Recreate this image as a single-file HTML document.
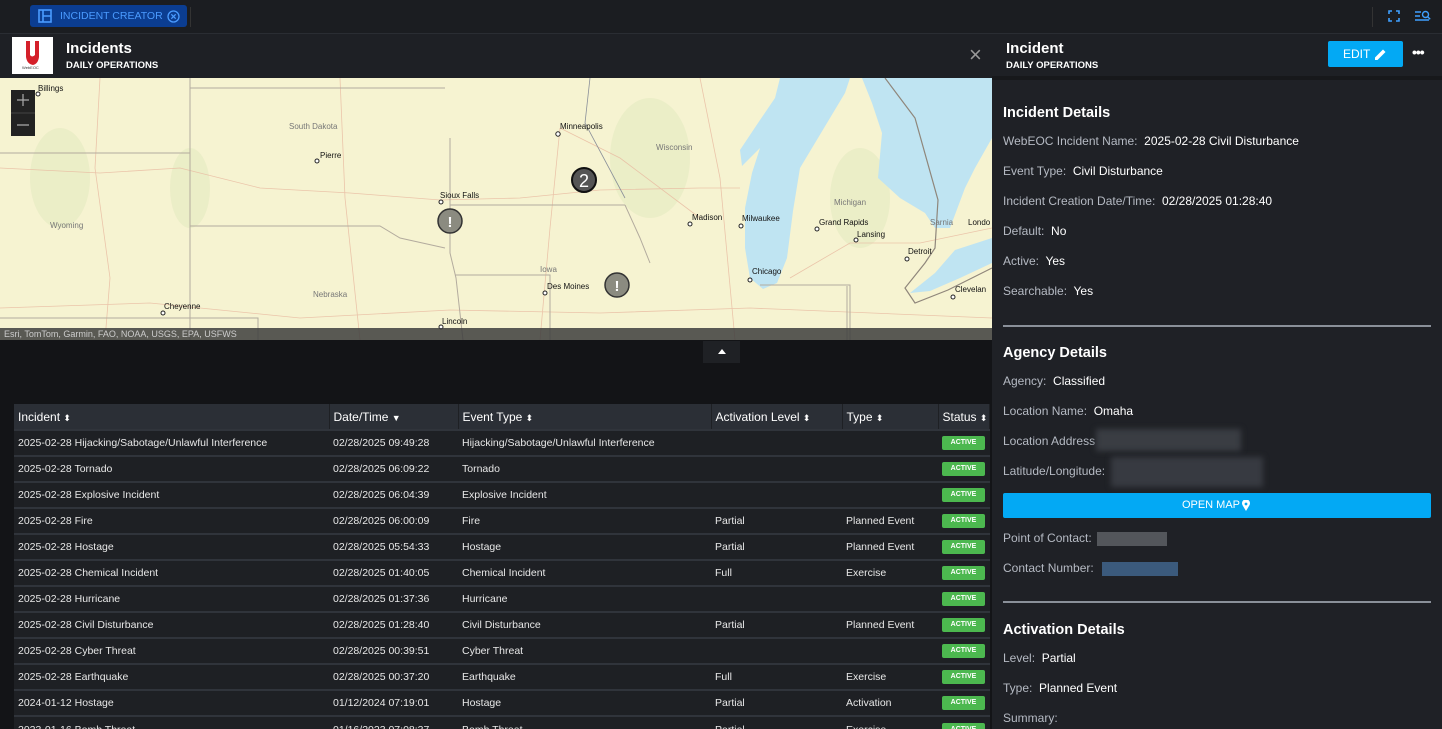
<!DOCTYPE html>
<html><head><meta charset="utf-8"><style>
*{margin:0;padding:0;box-sizing:border-box}
html,body{width:1442px;height:729px;overflow:hidden}
body{background:#131417;font-family:"Liberation Sans",Arial,sans-serif;color:#e6e8eb;position:relative}
.abs{position:absolute}
#top{left:0;top:0;width:1442px;height:34px;background:#1b1d21;border-bottom:1px solid #2a2d33}
#tab{left:30px;top:5px;width:157px;height:22px;background:#0b3d91;border-radius:3px;color:#4a9bff;font-size:10.5px;line-height:22px;white-space:nowrap}
#hdr{left:0;top:34px;width:992px;height:44px;background:#1e2025}
#rhdr{left:992px;top:34px;width:450px;height:46px;background:#1e2025;border-bottom:4px solid #17181b}
#right{left:992px;top:80px;width:450px;height:649px;background:#1f2126}
.t1{font-size:15px;font-weight:bold;color:#fff}
.t2{font-size:9.5px;font-weight:bold;color:#fff}
.lab{font-size:12px;color:#b5bac3;position:absolute;left:11px;white-space:nowrap}
.lab b{color:#fff;font-weight:normal}
.sec{font-size:14.5px;font-weight:bold;color:#fff;position:absolute;left:11px}
table{position:absolute;left:14px;top:404px;width:976px;border-collapse:collapse;font-size:10.5px;table-layout:fixed}
th{background:#2b2f36;color:#fff;font-size:12px;font-weight:normal;text-align:left;height:26px;padding-left:4px;border-right:1px solid #1e2024;white-space:nowrap;overflow:hidden}
td{background:#1e2024;height:26px;padding:0 0 0 4px;border-top:2px solid #30343b;color:#e8e8e8;white-space:nowrap;overflow:hidden;line-height:22px}
.act{display:inline-block;background:#4cb84f;color:#fff;font-size:7px;font-weight:bold;width:43px;height:14px;line-height:14px;text-align:center;border-radius:2px;vertical-align:middle}
.ar{font-size:9px}
</style></head><body>
<div id="top" class="abs"></div>
<div id="tab" class="abs"><svg class="abs" style="left:8px;top:4px" width="14" height="14" viewBox="0 0 14 14" fill="none" stroke="#4a9bff" stroke-width="1.6"><rect x="1" y="1" width="12" height="12"/><path d="M5 1v12M5 7h8"/></svg><span class="abs" style="left:30px">INCIDENT CREATOR</span><svg class="abs" style="left:137px;top:5px" width="13" height="13" viewBox="0 0 13 13" fill="none" stroke="#4a9bff" stroke-width="1.3"><circle cx="6.5" cy="6.5" r="5.5"/><path d="M4.3 4.3l4.4 4.4M8.7 4.3l-4.4 4.4"/></svg></div>
<div class="abs" style="left:190px;top:7px;width:1px;height:20px;background:#333"></div>
<div class="abs" style="left:1372px;top:7px;width:1px;height:20px;background:#333"></div>
<svg class="abs" style="left:1388px;top:10px" width="12" height="12" viewBox="0 0 12 12" fill="none" stroke="#3fa0ff" stroke-width="1.6"><path d="M1 4V1h3M8 1h3v3M11 8v3H8M4 11H1V8"/></svg>
<svg class="abs" style="left:1415px;top:10px" width="16" height="12" viewBox="0 0 16 12" fill="none" stroke="#3fa0ff" stroke-width="1.4"><path d="M0 2h6M0 6h5M0 10h14"/><circle cx="10.5" cy="4.5" r="3"/><path d="M12.7 6.7l2.5 2.5"/></svg>
<div id="hdr" class="abs">
 <div class="abs" style="left:12px;top:3px;width:41px;height:37px;background:#fff"><svg class="abs" style="left:13px;top:4px" width="15" height="24" viewBox="0 0 15 24"><path d="M1 0h4v14q2 3 5 0V0h4v16q-1 7-6 8-6-1-7-8z" fill="#d4202a"/></svg><div class="abs" style="left:10px;top:28px;font-size:4px;color:#333">WebEOC</div></div>
 <div class="abs t1" style="left:66px;top:6px">Incidents</div>
 <div class="abs t2" style="left:66px;top:26px">DAILY OPERATIONS</div>
 <div class="abs" style="left:969px;top:8px;font-size:22px;color:#999">×</div>
</div>
<svg class="abs" style="left:0;top:78px" width="992" height="262" viewBox="0 0 992 262">
<rect width="992" height="262" fill="#f6f3d1"/>
<g fill="#e8ecc4" opacity=".8"><ellipse cx="60" cy="100" rx="30" ry="50"/><ellipse cx="190" cy="110" rx="20" ry="40"/><ellipse cx="650" cy="80" rx="40" ry="60"/><ellipse cx="860" cy="120" rx="30" ry="50"/></g>
<g fill="#bfe4f2">
<path d="M780 0 L850 0 L845 15 L830 40 L800 90 L793 133 L787 180 L777 205 L763 211 L750 200 L745 170 L745 130 L752 95 L760 70 L742 88 L740 72 L758 45 L775 20 Z"/>
<path d="M862 0 L992 0 L992 60 L975 90 L965 110 L950 150 L935 150 L925 135 L900 120 L878 100 L882 55 L872 25 Z"/>
<path d="M910 215 L935 195 L955 172 L992 160 L992 185 L960 200 L930 213 Z"/>
</g>
<g fill="none" stroke="#e8b9a0" stroke-width=".8" opacity=".8">
<path d="M0 90 L100 95 L180 90 L260 110 L350 115 L440 122 L520 120 L600 112 L700 110 L740 110"/>
<path d="M100 0 L95 90 L110 200 L105 262"/><path d="M340 0 L345 120 L360 262"/><path d="M560 50 L550 150 L540 262"/>
<path d="M0 230 L150 225 L300 240 L450 232 L600 235 L750 230 L992 240"/>
<path d="M700 0 L720 100 L735 262"/><path d="M790 200 L850 165 L920 165 L992 150"/><path d="M560 50 L620 80 L700 140"/>
</g>
<g fill="none" stroke="#b3ab9e" stroke-width="1"><path d="M190 0 V262"/><path d="M0 75 H190"/><path d="M190 10 H445"/><path d="M190 148 H380 L400 160 L445 170"/><path d="M450 60 V175 L456 200 L463 262"/><path d="M450 127 H625"/><path d="M455 197 H550 V262"/><path d="M0 240 H258 V262"/><path d="M625 127 L640 160 L650 185"/><path d="M760 207 H850 V262"/><path d="M847 208 V262"/></g>
<path d="M590 0 L585 45 L625 120" fill="none" stroke="#8a8f99" stroke-width=".8"/>
<path d="M885 0 L915 40 L938 122 L935 170 L925 185 L905 210 L915 225 L948 212 L992 190" fill="none" stroke="#8f867b" stroke-width="1.2"/>
<g font-family="Liberation Sans,sans-serif" font-size="8" fill="#111"><text x="38" y="13">Billings</text><text x="320" y="80">Pierre</text><text x="440" y="120">Sioux Falls</text><text x="560" y="51">Minneapolis</text><text x="547" y="211">Des Moines</text><text x="442" y="246">Lincoln</text><text x="164" y="231">Cheyenne</text><text x="692" y="142">Madison</text><text x="742" y="143">Milwaukee</text><text x="819" y="147">Grand Rapids</text><text x="857" y="159">Lansing</text><text x="908" y="176">Detroit</text><text x="752" y="196">Chicago</text><text x="955" y="214">Clevelan</text><text x="968" y="147">Londo</text></g>
<g font-family="Liberation Sans,sans-serif" font-size="8" fill="#777"><text x="289" y="51">South Dakota</text><text x="50" y="150">Wyoming</text><text x="313" y="219">Nebraska</text><text x="540" y="194">Iowa</text><text x="656" y="72">Wisconsin</text><text x="834" y="127">Michigan</text><text x="930" y="147">Sarnia</text></g>
<g fill="#fff" stroke="#222" stroke-width="1"><circle cx="38" cy="16" r="2"/><circle cx="317" cy="83" r="2"/><circle cx="441" cy="124" r="2"/><circle cx="558" cy="56" r="2.2"/><circle cx="545" cy="215" r="2"/><circle cx="441" cy="249" r="2"/><circle cx="163" cy="235" r="2"/><circle cx="690" cy="146" r="2"/><circle cx="741" cy="148" r="2"/><circle cx="817" cy="151" r="2"/><circle cx="856" cy="162" r="2"/><circle cx="907" cy="181" r="2"/><circle cx="750" cy="202" r="2"/><circle cx="953" cy="219" r="2"/></g>
<circle cx="584" cy="102" r="12" fill="#555" stroke="#111" stroke-width="2"/><text x="584" y="109" fill="#fff" font-size="18" text-anchor="middle" font-family="Liberation Sans">2</text>
<circle cx="450" cy="143" r="12" fill="#8b8b80" stroke="#333" stroke-width="1.5"/><text x="450" y="149" fill="#fff" font-size="15" font-weight="bold" text-anchor="middle" font-family="Liberation Sans">!</text>
<circle cx="617" cy="207" r="12" fill="#8b8b80" stroke="#333" stroke-width="1.5"/><text x="617" y="213" fill="#fff" font-size="15" font-weight="bold" text-anchor="middle" font-family="Liberation Sans">!</text>
<rect x="0" y="250" width="992" height="12" fill="#3d3d3d" opacity=".85"/><text x="4" y="259" font-size="9" fill="#ccc" font-family="Liberation Sans">Esri, TomTom, Garmin, FAO, NOAA, USGS, EPA, USFWS</text>
<rect x="11" y="12" width="24" height="46" fill="#222"/><path d="M17 22h12M23 16v12M17 47h12" stroke="#aaa" stroke-width="1.2"/><path d="M11 35h24" stroke="#444"/>
</svg>
<div class="abs" style="left:703px;top:341px;width:37px;height:22px;background:#1f2125"><svg class="abs" style="left:15px;top:8px" width="8" height="5"><path d="M0 5L4 0L8 5z" fill="#fff"/></svg></div>
<table>
<colgroup><col style="width:315px"><col style="width:129px"><col style="width:253px"><col style="width:131px"><col style="width:96px"><col></colgroup>
<tr><th>Incident <span class="ar">⬍</span></th><th>Date/Time <span class="ar">▼</span></th><th>Event Type <span class="ar">⬍</span></th><th>Activation Level <span class="ar">⬍</span></th><th>Type <span class="ar">⬍</span></th><th>Status <span class="ar">⬍</span></th></tr>
<tr><td>2025-02-28 Hijacking/Sabotage/Unlawful Interference</td><td>02/28/2025 09:49:28</td><td>Hijacking/Sabotage/Unlawful Interference</td><td></td><td></td><td><span class="act">ACTIVE</span></td></tr>
<tr><td>2025-02-28 Tornado</td><td>02/28/2025 06:09:22</td><td>Tornado</td><td></td><td></td><td><span class="act">ACTIVE</span></td></tr>
<tr><td>2025-02-28 Explosive Incident</td><td>02/28/2025 06:04:39</td><td>Explosive Incident</td><td></td><td></td><td><span class="act">ACTIVE</span></td></tr>
<tr><td>2025-02-28 Fire</td><td>02/28/2025 06:00:09</td><td>Fire</td><td>Partial</td><td>Planned Event</td><td><span class="act">ACTIVE</span></td></tr>
<tr><td>2025-02-28 Hostage</td><td>02/28/2025 05:54:33</td><td>Hostage</td><td>Partial</td><td>Planned Event</td><td><span class="act">ACTIVE</span></td></tr>
<tr><td>2025-02-28 Chemical Incident</td><td>02/28/2025 01:40:05</td><td>Chemical Incident</td><td>Full</td><td>Exercise</td><td><span class="act">ACTIVE</span></td></tr>
<tr><td>2025-02-28 Hurricane</td><td>02/28/2025 01:37:36</td><td>Hurricane</td><td></td><td></td><td><span class="act">ACTIVE</span></td></tr>
<tr><td>2025-02-28 Civil Disturbance</td><td>02/28/2025 01:28:40</td><td>Civil Disturbance</td><td>Partial</td><td>Planned Event</td><td><span class="act">ACTIVE</span></td></tr>
<tr><td>2025-02-28 Cyber Threat</td><td>02/28/2025 00:39:51</td><td>Cyber Threat</td><td></td><td></td><td><span class="act">ACTIVE</span></td></tr>
<tr><td>2025-02-28 Earthquake</td><td>02/28/2025 00:37:20</td><td>Earthquake</td><td>Full</td><td>Exercise</td><td><span class="act">ACTIVE</span></td></tr>
<tr><td>2024-01-12 Hostage</td><td>01/12/2024 07:19:01</td><td>Hostage</td><td>Partial</td><td>Activation</td><td><span class="act">ACTIVE</span></td></tr>
<tr><td>2023-01-16 Bomb Threat</td><td>01/16/2023 07:08:37</td><td>Bomb Threat</td><td>Partial</td><td>Exercise</td><td><span class="act">ACTIVE</span></td></tr>
</table>
<div id="rhdr" class="abs">
 <div class="abs t1" style="left:14px;top:6px">Incident</div>
 <div class="abs t2" style="left:14px;top:26px">DAILY OPERATIONS</div>
 <div class="abs" style="left:336px;top:7px;width:75px;height:26px;background:#03a9f4;border-radius:2px;color:#fff;font-size:12px;line-height:26px;padding-left:15px">EDIT <svg class="abs" style="left:47px;top:7px" width="12" height="12" viewBox="0 0 12 12"><path d="M0 12V9.5L8 1.5l2.5 2.5L2.5 12z" fill="#fff"/></svg></div>
 <div class="abs" style="left:420px;top:10px;font-size:14px;color:#fff;letter-spacing:-1px;font-weight:bold">•••</div>
</div>
<div id="right" class="abs">
 <div class="sec" style="top:25px">Incident Details</div>
 <div class="lab" style="top:54px">WebEOC Incident Name:&nbsp; <b>2025-02-28 Civil Disturbance</b></div>
 <div class="lab" style="top:84px">Event Type:&nbsp; <b>Civil Disturbance</b></div>
 <div class="lab" style="top:114px">Incident Creation Date/Time:&nbsp; <b>02/28/2025 01:28:40</b></div>
 <div class="lab" style="top:144px">Default:&nbsp; <b>No</b></div>
 <div class="lab" style="top:174px">Active:&nbsp; <b>Yes</b></div>
 <div class="lab" style="top:204px">Searchable:&nbsp; <b>Yes</b></div>
 <div class="abs" style="left:11px;top:245px;width:428px;height:2px;background:#8a9099"></div>
 <div class="sec" style="top:265px">Agency Details</div>
 <div class="lab" style="top:294px">Agency:&nbsp; <b>Classified</b></div>
 <div class="lab" style="top:324px">Location Name:&nbsp; <b>Omaha</b></div>
 <div class="lab" style="top:354px">Location Address</div>
 <div class="abs" style="left:104px;top:349px;width:145px;height:22px;background:#3a3d43;filter:blur(3px)"></div>
 <div class="lab" style="top:384px">Latitude/Longitude:</div>
 <div class="abs" style="left:119px;top:377px;width:152px;height:30px;background:#373a41;filter:blur(3px)"></div>
 <div class="abs" style="left:11px;top:413px;width:428px;height:25px;background:#03a9f4;border-radius:2px;color:#fff;font-size:11px;line-height:25px;text-align:center">OPEN MAP &nbsp;&nbsp;&nbsp;</div>
 <svg class="abs" style="left:250px;top:420px" width="8" height="11" viewBox="0 0 8 11"><path d="M4 11L0.7 5.5A4 4 0 1 1 7.3 5.5z" fill="#fff"/><circle cx="4" cy="4" r="1.4" fill="#03a9f4"/></svg>
 <div class="lab" style="top:451px">Point of Contact:</div>
 <div class="abs" style="left:105px;top:452px;width:70px;height:14px;background:#6a6d72;opacity:.7"></div>
 <div class="lab" style="top:481px">Contact Number:</div>
 <div class="abs" style="left:110px;top:482px;width:76px;height:14px;background:#3b5a7c"></div>
 <div class="abs" style="left:11px;top:521px;width:428px;height:2px;background:#8a9099"></div>
 <div class="sec" style="top:542px">Activation Details</div>
 <div class="lab" style="top:571px">Level:&nbsp; <b>Partial</b></div>
 <div class="lab" style="top:601px">Type:&nbsp; <b>Planned Event</b></div>
 <div class="lab" style="top:631px">Summary:</div>
</div>
</body></html>
